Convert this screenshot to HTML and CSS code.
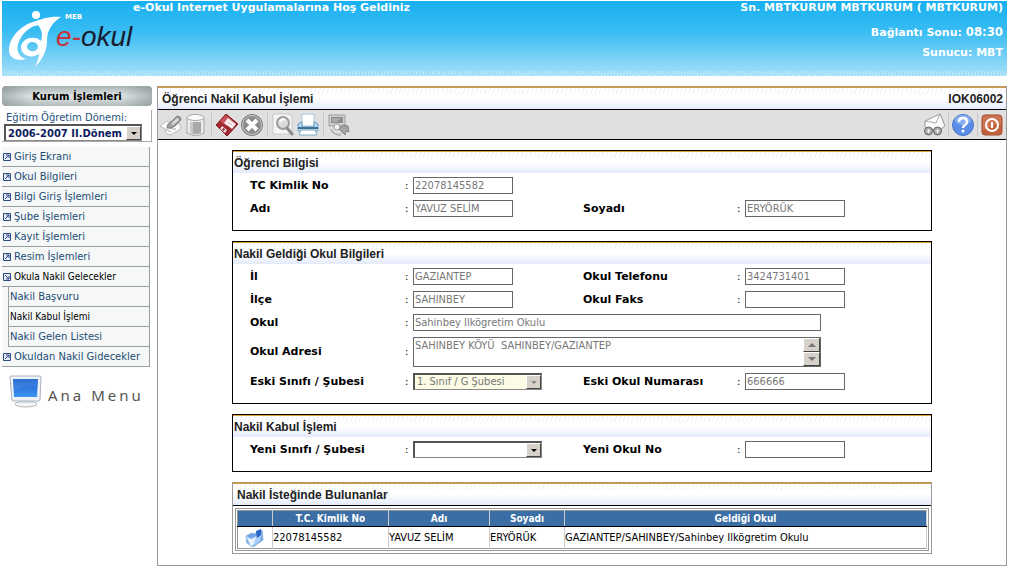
FILE: index.html
```html
<!DOCTYPE html>
<html lang="tr">
<head>
<meta charset="utf-8">
<title>e-Okul</title>
<link rel="stylesheet" href="styles.css">
</head>
<body>
<header class="banner">
  <div class="logo">
    <svg class="logo-mark" width="54" height="60" viewBox="9 8 54 60" aria-hidden="true">
      <circle cx="36" cy="15" r="4" fill="#fff"/>
      <path d="M61 17C50 16 42 19 33 22C20 26 9 38 9 50C9 58 17 62 26 59C16 56 15 46 22 36C26 30 32 26 39 25Q50 22 61 17Z" fill="#fff"/>
      <path d="M61 17C52 23 47 30 47 41C47 51 42 60 35 67C37 62 39 58 39 54C32 59 21 56 21 47C22 37 36 35 41 41C43 35 42 29 37 24C45 21 52 18 61 17ZM38 46C36 40 27 41 27 47C28 53 38 53 38 46Z" fill="#fff" fill-rule="evenodd"/>
    </svg>
    <div class="logo-text">
      <small class="logo-meb">MEB</small>
      <div class="logo-name"><span class="logo-e">e-</span>okul</div>
    </div>
  </div>
  <h1 class="welcome">e-Okul Internet Uygulamalarına Hoş Geldiniz</h1>
  <div class="session">
    <div>Sn. MBTKURUM MBTKURUM ( MBTKURUM)</div>
    <div>Bağlantı Sonu: <span class="clock">08:30</span></div>
    <div>Sunucu: MBT</div>
  </div>
</header>

<div class="layout">
  <aside class="sidebar">
    <h2 class="side-title">Kurum İşlemleri</h2>
    <div class="term">
      <label for="term">Eğitim Öğretim Dönemi:</label>
      <div class="select term-select">
        <select id="term"><option>2006-2007 II.Dönem</option></select>
        <span class="arrow"></span>
      </div>
    </div>
    <nav>
      <ul class="menu">
        <li><a href="#"><svg class="bullet" viewBox="0 0 8 8"><path d="M.5.5h7v7h-7zM3 2h3v3M6 2L2 6"/></svg>Giriş Ekranı</a></li>
        <li><a href="#"><svg class="bullet" viewBox="0 0 8 8"><path d="M.5.5h7v7h-7zM3 2h3v3M6 2L2 6"/></svg>Okul Bilgileri</a></li>
        <li><a href="#"><svg class="bullet" viewBox="0 0 8 8"><path d="M.5.5h7v7h-7zM3 2h3v3M6 2L2 6"/></svg>Bilgi Giriş İşlemleri</a></li>
        <li><a href="#"><svg class="bullet" viewBox="0 0 8 8"><path d="M.5.5h7v7h-7zM3 2h3v3M6 2L2 6"/></svg>Şube İşlemleri</a></li>
        <li><a href="#"><svg class="bullet" viewBox="0 0 8 8"><path d="M.5.5h7v7h-7zM3 2h3v3M6 2L2 6"/></svg>Kayıt İşlemleri</a></li>
        <li><a href="#"><svg class="bullet" viewBox="0 0 8 8"><path d="M.5.5h7v7h-7zM3 2h3v3M6 2L2 6"/></svg>Resim İşlemleri</a></li>
        <li><a href="#" class="active"><svg class="bullet" viewBox="0 0 8 8"><path d="M.5.5h7v7h-7zM3 6h3v-3M6 6L2 2"/></svg>Okula Nakil Gelecekler</a>
          <ul class="submenu">
            <li><a href="#">Nakil Başvuru</a></li>
            <li><a href="#" class="active">Nakil Kabul İşlemi</a></li>
            <li><a href="#">Nakil Gelen Listesi</a></li>
          </ul>
        </li>
        <li><a href="#"><svg class="bullet" viewBox="0 0 8 8"><path d="M.5.5h7v7h-7zM3 2h3v3M6 2L2 6"/></svg>Okuldan Nakil Gidecekler</a></li>
      </ul>
    </nav>
    <a class="home" href="#">
      <svg width="34" height="34" viewBox="0 0 34 34" aria-hidden="true">
        <defs><linearGradient id="scr" x1="0" y1="0" x2="0" y2="1"><stop offset="0" stop-color="#1a5cc4"/><stop offset=".55" stop-color="#2f7ae0"/><stop offset="1" stop-color="#3c96f0"/></linearGradient></defs>
        <ellipse cx="18" cy="29" rx="11" ry="3" fill="#f4f4f4" stroke="#b4b8bc"/>
        <path d="M12 25h11l2 3H10z" fill="#d4d8dc"/>
        <path d="M3 1h29q1 0 1 1l-1 23q0 1-1 1H5q-1 0-1-1L2 2q0-1 1-1z" fill="#eef1f5" stroke="#a9b4c2"/>
        <path d="M5 4h25l-1 18H6z" fill="url(#scr)"/>
        <path d="M6 15q12-5 23-3l1-8H5z" fill="#5c9cf0" opacity=".3"/>
      </svg>
      <span>Ana Menu</span>
    </a>
  </aside>

  <main class="content">
    <div class="title-bar ribbon">
      <h2>Öğrenci Nakil Kabul İşlemi</h2>
      <span>IOK06002</span>
    </div>
    <div class="toolbar">
      <button type="button" aria-label="Yeni"><svg viewBox="0 0 24 24"><path d="M1 13l7-5 13 3 1 5-11 6-4-2-1-4z" fill="#fbfbfb" stroke="#bbb"/><path d="M6 16l6 3M8 12q3 5 9 4" stroke="#aaa" fill="none"/><path d="M8 15q0-5 4-6l6-6q4 0 4 4l-6 6q-4 3-8 2z" fill="#a2a2a2" stroke="#7c7c7c"/><path d="M12 11l6-6 2 2-6 5z" fill="#dcdcdc"/></svg></button>
      <button type="button" aria-label="Sil"><svg viewBox="0 0 24 24"><path d="M3 4v16q9 5 17 0V4z" fill="#ececec" stroke="#a4a4a4"/><path d="M6 9h11v11q-5 2-11 0z" fill="#a8a8a8"/><path d="M6 9h3v12l-3-1z" fill="#c9c9c9"/><ellipse cx="11.500" cy="4.500" rx="8.500" ry="3" fill="#fafafa" stroke="#a4a4a4"/></svg></button>
      <span class="sep"></span>
      <button type="button" aria-label="Kaydet"><svg viewBox="0 0 24 24"><path d="M11 1l12 10-11 12L1 12z" fill="#a02830" stroke="#7c1820"/><path d="M11 2l6 5-6 6-6-5z" fill="#c8545a"/><path d="M13 5l8 6-4 5-8-6z" fill="#fbeeee"/><path d="M7 13l5 4-2 3-5-4z" fill="#f3dede"/><path d="M8 15l2 1-1 2-2-1z" fill="#803038"/><path d="M13 9l4 3M15 7l4 3" stroke="#d4b0b0"/></svg></button>
      <button type="button" aria-label="İptal"><svg viewBox="0 0 24 24"><circle cx="12" cy="12" r="10.500" fill="#8c8c8c" stroke="#777"/><circle cx="12" cy="12" r="9.500" fill="none" stroke="#c9c9c9"/><path d="M7 7l10 10M17 7L7 17" stroke="#fff" stroke-width="4"/></svg></button>
      <span class="sep"></span>
      <button type="button" aria-label="Ara"><svg viewBox="0 0 24 24"><path d="M2 1h16l3 3v17H2z" fill="#f5f5f5" stroke="#c8c8c8"/><circle cx="12" cy="10" r="6" fill="#dadada" stroke="#9c9c9c" stroke-width="2"/><path d="M9 9q2-4 5-2" stroke="#fff" fill="none" stroke-width="2"/><path d="M16 15l5 6" stroke="#8c8c8c" stroke-width="3" stroke-linecap="round"/></svg></button>
      <button type="button" aria-label="Yazdır"><svg viewBox="0 0 24 24"><path d="M6 1h12v12H6z" fill="#fff" stroke="#a8c4da"/><path d="M2 11l3-2h1v5h12V9h1l3 2v7H2z" fill="#b5dbf3" stroke="#6e9fc4"/><path d="M2 14h20v2H2z" fill="#3f7096"/><path d="M5 17h14l2 5H3z" fill="#fff" stroke="#88aac4"/></svg></button>
      <span class="sep"></span>
      <button type="button" aria-label="Aktar"><svg viewBox="0 0 24 24"><path d="M2 2h16v11H2z" fill="#d0d0d0" stroke="#9c9c9c"/><path d="M4 4h12v6H4z" fill="#8c8c8c"/><path d="M5 6h8M5 8h6" stroke="#c4c4c4"/><path d="M5 16q3 6 9 4v3q-9 0-11-7z" fill="#b5b5b5"/><circle cx="10" cy="14" r="3" fill="#f4f4f4" stroke="#999"/><path d="M12 16l4-4 5 1 1 6-3-1-1 4z" fill="#a4a4a4" stroke="#848484"/></svg></button>
      <span class="spacer"></span>
      <button type="button" aria-label="Mesaj"><svg viewBox="0 0 24 24"><path d="M3 8L18 1l5 12-7 5-13-4z" fill="#fcfcfc" stroke="#999"/><path d="M3 8l11 2 4-9" fill="none" stroke="#aaa"/><circle cx="6.500" cy="18" r="4" fill="#aaa" stroke="#666"/><circle cx="15.500" cy="18" r="4" fill="#aaa" stroke="#666"/><path d="M6.500 16v4M4.500 18h4M15.500 16v4M13.500 18h4" stroke="#f4f4f4"/></svg></button>
      <span class="sep"></span>
      <button type="button" aria-label="Yardım"><svg viewBox="0 0 24 24"><circle cx="12" cy="12" r="10.500" fill="#5c8ee8" stroke="#4a74cc"/><ellipse cx="12" cy="7" rx="8" ry="5" fill="#a5c4f7" opacity=".6"/><path d="M8 9q0-4 4-4t4 4q0 2-2 3t-2 3" fill="none" stroke="#fff" stroke-width="2.500"/><circle cx="12" cy="18" r="1.500" fill="#fff"/></svg></button>
      <span class="sep"></span>
      <button type="button" aria-label="Çıkış"><svg viewBox="0 0 24 24"><rect x="2" y="2" width="20" height="20" rx="3" fill="#c0603c" stroke="#a85030"/><path d="M3 3h18v8q-9 1-18 6z" fill="#e49a78" opacity=".4"/><circle cx="12" cy="12" r="6" fill="none" stroke="#fff" stroke-width="2"/><path d="M12 9v6" stroke="#fff" stroke-width="2"/></svg></button>
    </div>

    <div class="panels">
      <section class="panel">
        <h3 class="ribbon">Öğrenci Bilgisi</h3>
        <div class="fields">
          <label for="tc">TC Kimlik No</label><i>:</i><input id="tc" class="row-only" value="22078145582" disabled>
          <label for="ad">Adı</label><i>:</i><input id="ad" value="YAVUZ SELİM" disabled>
          <label for="soyad">Soyadı</label><i>:</i><input id="soyad" value="ERYÖRÜK" disabled>
        </div>
      </section>

      <section class="panel">
        <h3 class="ribbon">Nakil Geldiği Okul Bilgileri</h3>
        <div class="fields">
          <label for="il">İl</label><i>:</i><input id="il" value="GAZIANTEP" disabled>
          <label for="tel">Okul Telefonu</label><i>:</i><input id="tel" value="3424731401" disabled>
          <label for="ilce">İlçe</label><i>:</i><input id="ilce" value="SAHINBEY" disabled>
          <label for="faks">Okul Faks</label><i>:</i><input id="faks" disabled>
          <label for="okul">Okul</label><i>:</i><input id="okul" class="wide" value="Sahinbey Ilkögretim Okulu" disabled>
          <label for="adres">Okul Adresi</label><i>:</i>
          <div class="address wide">
            <textarea id="adres" disabled>SAHINBEY KÖYÜ  SAHINBEY/GAZIANTEP</textarea>
            <div class="scroll"><span class="arrow up"></span><span class="arrow"></span></div>
          </div>
          <label for="eski">Eski Sınıfı / Şubesi</label><i>:</i>
          <div class="select disabled"><select id="eski" disabled><option>1. Sınıf / G Şubesi</option></select><span class="arrow"></span></div>
          <label for="eskino">Eski Okul Numarası</label><i>:</i><input id="eskino" value="666666" disabled>
        </div>
      </section>

      <section class="panel">
        <h3 class="ribbon">Nakil Kabul İşlemi</h3>
        <div class="fields">
          <label for="yeni">Yeni Sınıfı / Şubesi</label><i>:</i>
          <div class="select"><select id="yeni"><option></option></select><span class="arrow"></span></div>
          <label for="yenino">Yeni Okul No</label><i>:</i><input id="yenino">
        </div>
      </section>

      <section class="panel list">
        <h3 class="ribbon">Nakil İsteğinde Bulunanlar</h3>
        <div class="table-frame">
          <table>
            <colgroup><col class="c-open"><col class="c-tc"><col class="c-name"><col class="c-surname"><col></colgroup>
            <thead><tr><th></th><th>T.C. Kimlik No</th><th>Adı</th><th>Soyadı</th><th>Geldiği Okul</th></tr></thead>
            <tbody><tr>
              <td class="open"><button type="button" aria-label="Aç"><svg viewBox="0 0 20 20"><path d="M1 8l6-3 2 1 8-4 1 10-10 7-6-4z" fill="#6aa2ea" stroke="#8cb4e4"/><path d="M3 10l6 1 8-6-2 8-8 6z" fill="#a8d0fa"/><path d="M1 8l5 3 6-3-3 8-3 3z" fill="#eaf5ff" stroke="#a8c8ec"/><path d="M11 3l5-2v6l-4 3z" fill="#2a61c4"/></svg></button></td>
              <td>22078145582</td><td>YAVUZ SELİM</td><td>ERYÖRÜK</td><td>GAZIANTEP/SAHINBEY/Sahinbey Ilkögretim Okulu</td>
            </tr></tbody>
          </table>
        </div>
      </section>
    </div>
  </main>
</div>
</body>
</html>
```

FILE: styles.css
```css
* { box-sizing: border-box; }

body {
  margin: 0;
  padding: 1px 3px 3px 2px;
  background: #fff;
  color: #000;
  font: 11px/14px "DejaVu Sans Condensed", "DejaVu Sans", sans-serif;
}

h1, h2, h3, ul { margin: 0; padding: 0; }
ul { list-style: none; }
a { text-decoration: none; }

.banner {
  display: flex;
  height: 75px;
  padding-right: 4px;
  background:
    repeating-linear-gradient(110deg, rgba(255, 255, 255, .35) 0 1px, transparent 1px 3px) bottom / 100% 5px no-repeat,
    linear-gradient(#18b0f0, #38bcf2 40%, #a4dff8);
  color: #fff;
  font: bold 11px/14px "DejaVu Sans", sans-serif;
}

.logo { display: flex; width: 131px; padding: 7px 0 0 7px; }
.logo-mark { flex: none; }
.logo-text { display: flex; flex-direction: column; margin: 5px 0 0 -7px; white-space: nowrap; }
.logo-meb { padding-left: 9px; font: bold 7px/8px "DejaVu Sans", sans-serif; }
.logo-name { color: #181c30; font: italic 28px/32px "Liberation Sans", sans-serif; }
.logo-e { color: #c8303c; }
.welcome { font-size: 11px; line-height: 14px; }
.session { display: grid; flex: 1; align-content: start; gap: 6px; text-align: right; }
.session div:first-child { margin-bottom: 4px; }
.clock { font: bold 13px/14px "DejaVu Sans Condensed", sans-serif; }

.layout { display: flex; gap: 5px; margin-top: 10px; }
.sidebar { flex: none; width: 150px; }

.side-title {
  height: 20px;
  border-radius: 4px;
  background: linear-gradient(90deg, rgba(120, 132, 134, .5), transparent 20% 80%, rgba(120, 132, 134, .5)), linear-gradient(#aab4b5, #dfe5e5 50%, #b4bcbd);
  font: bold 10px/21px "DejaVu Sans", sans-serif;
  text-align: center;
}

.term {
  margin: 4px 0 5px;
  padding: 1px 2px 0;
  border-right: 1px solid #aaa;
  border-bottom: 1px solid #aaa;
  color: #28507c;
  font: 10px/13px "DejaVu Sans", sans-serif;
}
.term label { display: block; padding-left: 2px; }

.menu { width: 148px; border-right: 1px solid #9aa0a0; background: #f5f8f7; }
.menu a {
  display: flex;
  align-items: center;
  gap: 3px;
  height: 20px;
  padding-left: 1px;
  border-bottom: 1px solid #9aa0a0;
  color: #1c4c74;
  font: 10px/14px "DejaVu Sans", sans-serif;
  white-space: nowrap;
}
.menu .active { color: #000; font-family: "DejaVu Sans Condensed", "DejaVu Sans", sans-serif; }
.bullet { width: 8px; height: 8px; fill: #e4eafa; stroke: #2c4c80; }
.submenu { margin-left: 6px; border-left: 1px solid #9aa0a0; }

.home {
  display: flex;
  align-items: center;
  gap: 6px;
  margin: 8px 0 0 6px;
  color: #555;
  font: 15px/20px "Noto Sans", sans-serif;
  letter-spacing: 3px;
  white-space: nowrap;
}
.home span { padding-top: 6px; }

.content { flex: 1; min-width: 0; border: 1px solid #999; border-top: 0; }

.ribbon {
  border-top: 1px solid #dda23c;
  background:
    repeating-linear-gradient(110deg, #f3f3f5 0 1px, transparent 1px 4px) 0 0 / 100% 6px no-repeat,
    linear-gradient(#fff, #fff 50%, #e4eafa);
}

.title-bar {
  display: flex;
  justify-content: space-between;
  height: 24px;
  padding: 0 3px 0 4px;
  border-top: 2px solid #c49a58;
  border-bottom: 1px solid #000;
  color: #222;
  font: bold 12px/22px "Liberation Sans", sans-serif;
}
.title-bar h2 { font-size: 12px; }

.toolbar {
  display: flex;
  align-items: center;
  gap: 1px;
  height: 30px;
  padding: 0 2px 0 1px;
  border-bottom: 1px solid #000;
  background: #e0e0e0;
}
.toolbar button { width: 24px; height: 24px; padding: 0; border: 0; background: none; }
.toolbar svg { display: block; width: 24px; height: 24px; }
.sep { width: 1px; height: 24px; margin: 0 2px; background: #c6c6c6; }
.spacer { flex: 1; }
.spacer ~ .sep { margin: 0 1px; }

.panels { display: grid; gap: 10px; max-width: 700px; margin: 10px auto 11px; }
.panel { border: 1px solid #000; }
.panel h3 {
  height: 22px;
  padding-left: 1px;
  color: #222;
  font: bold 12px/22px "Liberation Sans", sans-serif;
}

.fields {
  display: grid;
  grid-template-columns: 155px 8px 170px 154px 8px 1fr;
  align-items: center;
  gap: 6px 0;
  padding: 4px 0 13px 17px;
}
.fields label { font: bold 11px/14px "DejaVu Sans", sans-serif; }
.fields i { font-style: normal; }
.fields input { width: 100px; }
.fields .row-only { grid-column: 3 / -1; }
.fields .wide { grid-column: 3 / -1; width: 408px; }

input, textarea {
  height: 17px;
  margin: 0;
  padding: 0 1px;
  border: 1px solid #666;
  border-radius: 0;
  background: #fff;
  color: #000;
  font: 11px/15px "DejaVu Sans Condensed", "DejaVu Sans", sans-serif;
}
input:disabled, textarea:disabled { color: #777; }

.address { display: flex; height: 30px; border: 1px solid #666; }
.address textarea { flex: 1; height: 28px; border: 0; resize: none; overflow: hidden; }
.scroll { display: grid; width: 17px; }

.arrow {
  display: grid;
  place-items: center;
  border: 1px solid;
  border-color: #fff #444 #444 #fff;
  background: #d6d2ca;
}
.arrow::after { content: ""; border: 3px solid transparent; border-top: 3px solid #000; border-bottom: 0; }
.scroll .arrow::after { border-width: 4px 4px 0; border-top-color: #777; }
.scroll .up::after { border-width: 0 4px 4px; border-bottom: 4px solid #777; }

.select {
  display: flex;
  width: 129px;
  height: 17px;
  border: 1px solid #888;
  border-top: 2px solid #555;
  border-left: 2px solid #555;
  background: #fff;
}
.select select {
  flex: 1;
  min-width: 0;
  padding: 0 2px;
  border: 0;
  background: none;
  appearance: none;
  font: 11px/14px "DejaVu Sans Condensed", "DejaVu Sans", sans-serif;
}
.select .arrow { width: 15px; }
.term-select.select { width: 138px; }
.term-select.select select { color: #0c1c60; font: bold 10px/13px "DejaVu Sans", sans-serif; }
.select.disabled { background: #fbfbe6; }
.disabled select { color: #777; opacity: 1; }
.disabled .arrow::after { border-top-color: #888; }

.list { border-color: #999; border-top: 0; }
.list h3 { height: 24px; padding-left: 4px; border-top: 2px solid #c49a58; border-bottom: 1px solid #000; }
.table-frame { margin: 2px; padding: 1px; border: 1px solid #999; }
table { width: 100%; border: 1px solid #999; border-collapse: collapse; table-layout: fixed; }
th {
  height: 16px;
  padding: 0;
  border-right: 1px solid #ccc;
  border-bottom: 1px solid #000;
  background: #3a6ea5;
  color: #fff;
  font: bold 10px/14px "DejaVu Sans Condensed", "DejaVu Sans", sans-serif;
}
td { height: 22px; padding: 0; border-right: 1px solid #ccc; white-space: nowrap; }
.c-open { width: 35px; }
.c-tc { width: 116px; }
.c-name { width: 101px; }
.c-surname { width: 75px; }
.open button { display: block; width: 20px; height: 20px; margin: 0 auto; padding: 0; border: 0; background: none; }
.open svg { display: block; width: 20px; height: 20px; }
```
